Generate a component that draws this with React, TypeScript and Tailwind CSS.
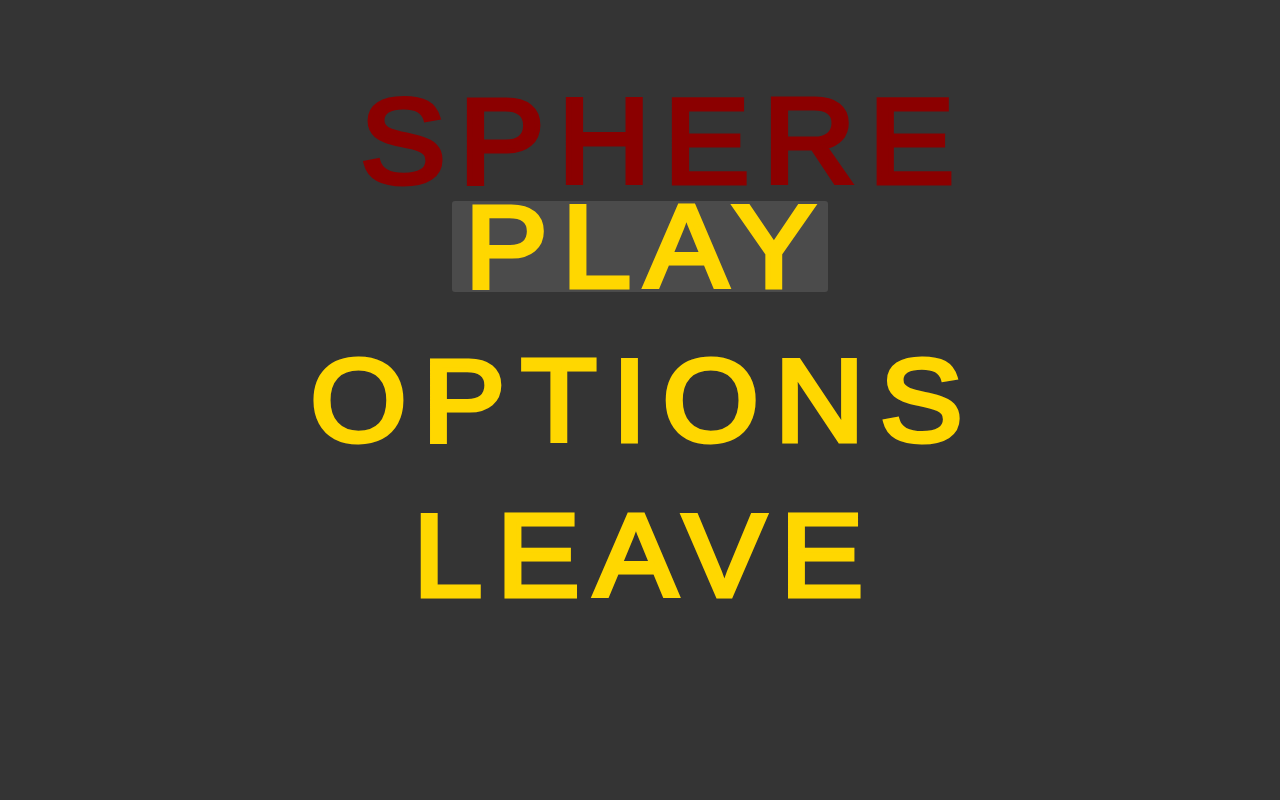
import React from "react";

export default function App() {
  return (
    <div className="w-[1280px] h-[800px] bg-[#343434] overflow-hidden font-['Liberation_Sans',Arial,sans-serif]">
      <div className="flex flex-col items-center pt-[96px]">
        <h1 className="h-[91px] flex items-center pl-[46px] scale-x-[1.06] text-[121px] leading-none tracking-[12.6px] whitespace-nowrap font-normal text-[#8b0000] [-webkit-text-stroke:5px_#8b0000]">
          SPHERE
        </h1>
        <div className="mt-[14px] flex flex-col items-center gap-[63px] text-[117px] leading-none whitespace-nowrap text-[#ffd700] [-webkit-text-stroke:5px_#ffd700]">
          <div className="w-[376px] h-[91px] flex items-center justify-center bg-[#4b4b4b] rounded-[3px] overflow-visible">
            <span className="pl-[13px] scale-x-[1.06] tracking-[13.3px]">PLAY</span>
          </div>
          <div className="h-[91px] flex items-center pl-[9px] scale-x-[1.06] tracking-[14.8px]">OPTIONS</div>
          <div className="h-[91px] mt-[1px] flex items-center pl-[11px] scale-x-[1.06] tracking-[14px]">LEAVE</div>
        </div>
      </div>
    </div>
  );
}
